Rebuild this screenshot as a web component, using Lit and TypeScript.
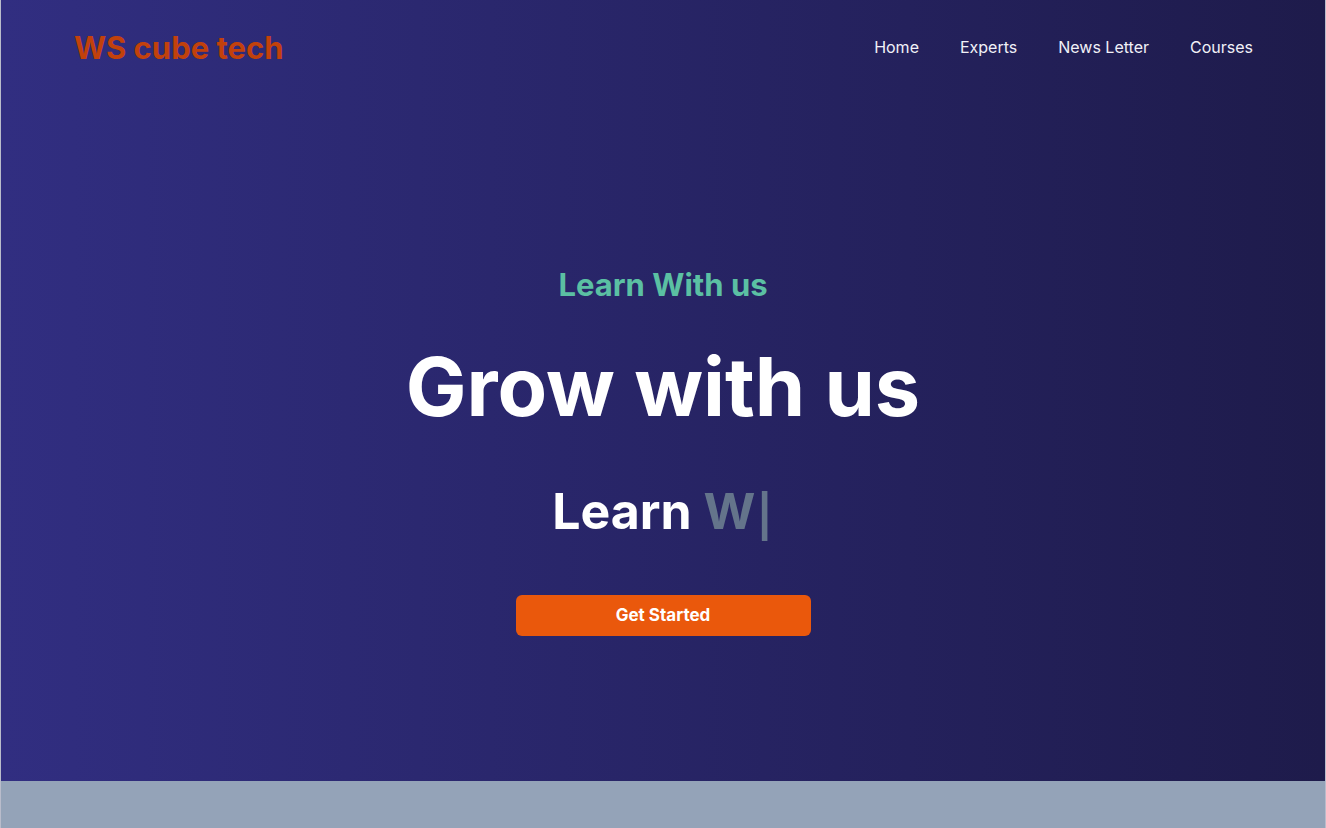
import { LitElement, html, css } from "lit";
import { customElement } from "lit/decorators.js";

@customElement("app-root")
export class AppRoot extends LitElement {
  static styles = css`
    :host {
      display: flex;
      flex-direction: column;
      box-sizing: border-box;
      min-height: 100vh;
      border: solid #b9bccb;
      border-width: 0 1px;
      background: #94a3b8;
      color: #fff;
      font-family: Inter, "Liberation Sans", sans-serif;
    }
    * { box-sizing: border-box; margin: 0; }
    .hero {
      flex: 1;
      background: linear-gradient(to right, #312e81, #1e1b4b);
      display: flex;
      flex-direction: column;
    }
    .next { height: 47px; }
    .bar {
      display: flex;
      justify-content: space-between;
      align-items: flex-start;
      padding: 23px 72px 0 73px;
    }
    .brand { font-size: 31px; line-height: 50px; font-weight: 700; color: #c2410c; }
    .links { display: flex; gap: 41px; list-style: none; padding: 0; }
    .links a { color: #f1f1f7; font-size: 16px; line-height: 48px; text-decoration: none; }
    .content {
      flex: 1;
      display: flex;
      flex-direction: column;
      align-items: center;
      justify-content: center;
      padding-top: 46px;
      text-align: center;
    }
    .eyebrow { font-size: 31px; line-height: 40px; font-weight: 700; color: #5bc0a3; }
    .title { font-size: 81px; line-height: 84px; font-weight: 700; margin-top: 40px; }
    .typed { font-size: 50px; line-height: 60px; font-weight: 700; margin-top: 52px; }
    .word { color: #64748b; }
    .cursor { font-family: "DejaVu Sans", sans-serif; line-height: 1px; }
    .start {
      width: 295px;
      max-width: 100%;
      padding: 8px 16px;
      margin-top: 54px;
      border: 0;
      border-radius: 6px;
      background: #ea580c;
      color: #fff;
      font: 700 17px/25px Inter, "Liberation Sans", sans-serif;
      cursor: pointer;
    }
  `;

  render() {
    return html`
      <section class="hero">
        <header class="bar">
          <h1 class="brand">WS cube tech</h1>
          <nav>
            <ul class="links">
              ${["Home", "Experts", "News Letter", "Courses"].map(
                (label) => html`<li><a href="#">${label}</a></li>`
              )}
            </ul>
          </nav>
        </header>
        <main class="content">
          <p class="eyebrow">Learn With us</p>
          <h2 class="title">Grow with us</h2>
          <p class="typed">Learn <span class="word">W<span class="cursor">|</span></span></p>
          <button class="start" type="button">Get Started</button>
        </main>
      </section>
      <section class="next"></section>
    `;
  }
}
